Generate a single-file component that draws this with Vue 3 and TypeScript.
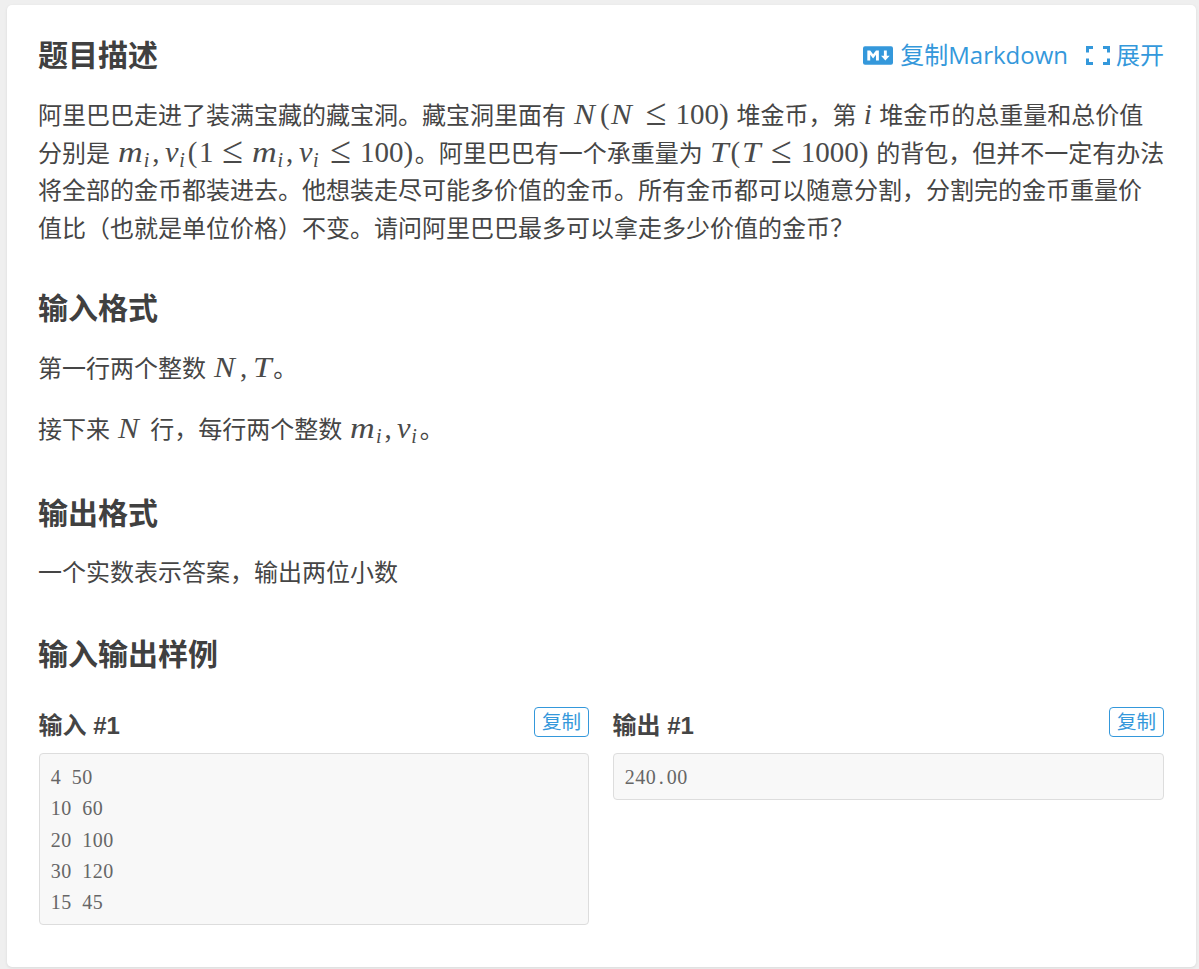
<script setup lang="ts">
const samples = [
  { label: '输入 #1', lines: ['4 50', '10 60', '20 100', '30 120', '15 45'] },
  { label: '输出 #1', lines: ['240.00'] },
]
</script>

<template>
  <main class="page">
    <article class="card">
      <header class="title-row">
        <h2>题目描述</h2>
        <div class="actions">
          <a class="action md">
            <svg class="md-icon" viewBox="0 0 208 128" aria-hidden="true">
              <rect width="208" height="128" rx="14" fill="#3498db" />
              <path fill="#fff" d="M30 98V30h20l20 25 20-25h20v68H90V59L70 84 50 59v39zm125 0l-30-33h20V30h20v35h20z" />
            </svg>
            复制Markdown
          </a>
          <a class="action">
            <svg class="expand-icon" viewBox="0 0 24 19" aria-hidden="true">
              <path fill="none" stroke="#3498db" stroke-width="3" d="M7 1.5H1.5v5M17 1.5h5.5v5M7 17.5H1.5v-5M17 17.5h5.5v-5" />
            </svg>
            展开
          </a>
        </div>
      </header>

      <p class="intro">
        阿里巴巴走进了装满宝藏的藏宝洞。藏宝洞里面有 <span class="m"><i class="n">N</i><span class="p">(</span><i class="n">N</i><span class="rel">≤</span>100<span class="p">)</span></span> 堆金币，第 <span class="m solo"><i class="ii">i</i></span> 堆金币的总重量和总价值<br />
        分别是 <span class="m"><i class="mm">m</i><sub>i</sub><span class="c">,</span><i class="v">v</i><sub>i</sub><span class="p">(</span>1<span class="rel">≤</span><i class="mm">m</i><sub>i</sub><span class="c">,</span><i class="v">v</i><sub>i</sub><span class="rel">≤</span>100<span class="p">)</span></span>。阿里巴巴有一个承重量为 <span class="m solo"><i class="t">T</i><span class="p">(</span><i class="t">T</i><span class="rel">≤</span>1000<span class="p">)</span></span> 的背包，但并不一定有办法<br />
        将全部的金币都装进去。他想装走尽可能多价值的金币。所有金币都可以随意分割，分割完的金币重量价<br />
        值比（也就是单位价格）不变。请问阿里巴巴最多可以拿走多少价值的金币？
      </p>

      <h2 class="section s1">输入格式</h2>
      <p class="first f1">第一行两个整数 <span class="m"><i class="n">N</i><span class="c">,</span><i class="t">T</i></span>。</p>
      <p class="next">接下来 <span class="m"><i class="n">N</i></span> 行，每行两个整数 <span class="m"><i class="mm">m</i><sub>i</sub><span class="c">,</span><i class="v">v</i><sub>i</sub></span>。</p>

      <h2 class="section s2">输出格式</h2>
      <p class="first">一个实数表示答案，输出两位小数</p>

      <h2 class="section s3">输入输出样例</h2>
      <section class="samples">
        <div v-for="s in samples" :key="s.label" class="sample">
          <div class="sample-head">
            <h3>{{ s.label }}</h3>
            <button type="button" class="copy">复制</button>
          </div>
          <pre class="code"><span v-for="l in s.lines" :key="l" class="code-line"><span v-for="(ch, i) in Array.from(l)" :key="i" class="ch">{{ ch }}</span></span></pre>
        </div>
      </section>
    </article>
  </main>
</template>

<style>
html, body { margin: 0; background: #efefef; }
</style>

<style scoped>
.page {
  padding: 5px 3px 2px 7px;
  font-family: "Open Sans", "Noto Sans CJK SC", sans-serif;
  color: #454545;
  font-size: 24px;
}
.card {
  background: #fff;
  border-radius: 5px;
  padding: 32px 32px 42px 32px;
  box-shadow: 0 1px 3px rgba(26, 26, 26, 0.1);
}
.title-row { display: flex; justify-content: space-between; align-items: center; }
h2 { margin: 0 0 0 -1px; font-size: 30px; line-height: 36px; font-weight: 700; color: #404040; }
.actions { display: flex; gap: 18px; }
.action { display: flex; align-items: center; gap: 6px; color: #3498db; font-size: 24px; line-height: 36px; }
.action.md { gap: 7px; }
.md-icon { width: 30px; height: 19px; }
.expand-icon { width: 24px; height: 19px; }
p { margin: 0 0 0 -1px; line-height: 37.7px; white-space: nowrap; }
.intro { margin-top: 23px; }
.s1 { margin-top: 43px; }
.s2 { margin-top: 48px; }
.s3 { margin-top: 45px; }
.first { margin-top: 22px; }
.f1 { margin-top: 23px; }
.next { margin-top: 23px; }
.m { font-family: "Liberation Serif", serif; font-size: 29px; line-height: 0; color: #4a4a4a; margin-left: 2px; }
.m.solo { margin-left: 1px; }
.m i { font-style: italic; display: inline-block; transform-origin: left center; }
.m .n { transform: scaleX(1.08); margin-right: 6.4px; }
.m .t { transform: scaleX(1.15); margin-right: 4.3px; }
.m .mm { transform: scaleX(1.18); margin-right: 4.6px; }
.m .v { transform: scaleX(1.05); margin-right: 1.2px; }
.m .ii { margin-right: 1px; }
.m .p { letter-spacing: 1.6px; }
.m .c { margin-right: 5.6px; }
.m .rel { font-size: 38px; margin: 0 8.9px; vertical-align: -1px; }
.m sub { font-size: 20px; font-style: italic; line-height: 0; vertical-align: -5px; letter-spacing: 2.9px; }
.samples { display: grid; grid-template-columns: 550px 1fr; gap: 24px; margin-top: 35px; align-items: start; }
.sample-head { display: flex; justify-content: space-between; align-items: flex-start; height: 30px; margin-bottom: 16px; }
h3 { margin: 4px 0 0 -0.5px; font-family: "Liberation Sans", "Noto Sans CJK SC", sans-serif; font-size: 24px; line-height: 30px; font-weight: 700; }
.copy {
  height: 30px; padding: 0 7px; box-sizing: border-box; background: #fff;
  border: 1px solid #3498db; border-radius: 4px; color: #3498db;
  font-family: inherit; font-size: 19.5px; line-height: 1;
}
.code {
  margin: 0; padding: 8px 10.5px 6px; background: #f8f8f8; border: 1px solid #ddd; border-radius: 4px;
  font-family: "Liberation Serif", serif; font-size: 20px;
  line-height: 31.3px; color: #666;
}
.code-line { display: block; }
.ch { display: inline-block; width: 10.5px; text-align: center; }
</style>
